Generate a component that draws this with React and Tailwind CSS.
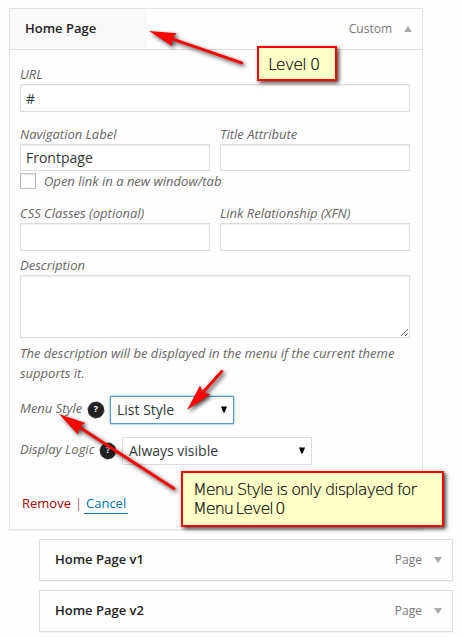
import React from "react";

const field = "block border border-[#ddd] bg-white shadow-[inset_0_1px_2px_rgba(0,0,0,0.07)] px-[5px] text-sm text-[#32373c] outline-none rounded-none";

function Label({ children }) {
  return <label className="block h-5 whitespace-nowrap text-[13px] leading-5 italic text-[#666]">{children}</label>;
}

function HelpIcon() {
  return (
    <svg width="18" height="18" viewBox="0 0 18 18" className="block shrink-0">
      <circle cx="9" cy="9" r="8.2" fill="#222" />
      <circle cx="9" cy="9" r="8.3" fill="none" stroke="#777" strokeWidth="0.8" strokeDasharray="3.5 3.02" />
      <text x="9" y="10.8" textAnchor="middle" fontSize="9" fontWeight="700" fill="#fff">?</text>
    </svg>
  );
}

function SelectBox({ children, className }) {
  return (
    <div className={"flex h-7 items-center justify-between border bg-white pl-1.5 pr-1.5 text-sm text-[#32373c] " + className}>
      <span>{children}</span>
      <svg className="mb-[2px]" width="6" height="7" viewBox="0 0 6 7"><path d="M0 0.5h6L3.7 6.5H2.3z" fill="#000" /></svg>
    </div>
  );
}

function Toggle({ up }) {
  return (
    <svg width="8" height="6" viewBox="0 0 8 6">
      <path d={up ? "M0 6L4 0l4 6z" : "M0 0h8L4 6z"} fill="#aaa" />
    </svg>
  );
}

function ChildItem({ title }) {
  return (
    <div className="flex h-[42px] w-[414px] items-center border border-[#ddd] bg-[#fefefe] pl-[15px] pr-[10px] shadow-[0_1px_1px_rgba(0,0,0,0.04)]">
      <span className="grow text-[13px] font-semibold text-[#222]">{title}</span>
      <span className="mr-3 text-[12px] text-[#777]">Page</span>
      <Toggle />
    </div>
  );
}

function Arrow({ x, y, length, angle }) {
  return (
    <g transform={`translate(${x} ${y}) rotate(${angle})`}>
      <path d={`M22 0H${length}`} stroke="#f00" strokeWidth="3" strokeLinecap="round" />
      <path d="M0 0L27 -6.8L24 0L27 6.8Z" fill="#f00" />
    </g>
  );
}

export default function App() {
  return (
    <div className="relative h-[637px] w-[462px] overflow-hidden bg-[#fefefe] pl-[9px] pt-2 font-['Open_Sans','Noto_Sans',sans-serif]">
      <section className="h-[522px] w-[414px] border border-[#e3e3e3] bg-[#fefefe] shadow-[0_1px_1px_rgba(0,0,0,0.04)]">
        <header className="flex h-[41px] items-center border-b border-[#ddd] pr-[10px]">
          <div className="flex h-10 w-[137px] items-center bg-[conic-gradient(#f6f6f6_25%,#fcfcfc_0_50%,#f6f6f6_0_75%,#fcfcfc_0)] bg-[length:2px_2px] pl-[15px] text-[13px] font-semibold text-[#222]">Home Page</div>
          <span className="ml-auto mr-3 text-[12px] text-[#777]">Custom</span>
          <Toggle up />
        </header>
        <div className="w-[401px] pl-[10px] pt-[14px]">
          <Label>URL</Label>
          <input className={field + " h-7 w-[390px]"} defaultValue="#" />
          <div className="mt-3 flex gap-[10px]">
            <div><Label>Navigation Label</Label><input className={field + " h-[27px] w-[190px]"} defaultValue="Frontpage" /></div>
            <div><Label>Title Attribute</Label><input className={field + " h-[27px] w-[190px]"} /></div>
          </div>
          <div className="mt-[2px] flex h-4 items-center gap-2">
            <span className="h-4 w-4 border border-[#bbb] bg-white shadow-[inset_0_1px_2px_rgba(0,0,0,0.1)]" />
            <Label>Open link in a new window/tab</Label>
          </div>
          <div className="mt-[14px] flex gap-[10px]">
            <div><Label>CSS Classes (optional)</Label><input className={field + " h-7 w-[190px]"} /></div>
            <div><Label>Link Relationship (XFN)</Label><input className={field + " h-7 w-[190px]"} /></div>
          </div>
          <div className="mt-1"><Label>Description</Label></div>
          <textarea className={field + " h-[63px] w-[390px] resize"} />
          <p className="mt-[5px] w-[390px] text-[13px] leading-5 italic text-[#666]">
            The description will be displayed in the menu if the current theme<br />supports it.
          </p>
          <div className="mt-[13px] flex h-7 items-center">
            <div className="w-[67px] pb-1"><Label>Menu Style</Label></div>
            <HelpIcon />
            <SelectBox className="ml-[5px] w-[124px] border-[#5b9dd9] shadow-[0_0_2px_rgba(30,140,190,0.8)]">List Style</SelectBox>
          </div>
          <div className="mt-[13px] flex h-7 items-center">
            <div className="w-[79px] pb-1"><Label>Display Logic</Label></div>
            <HelpIcon />
            <SelectBox className="ml-[5px] w-[190px] border-[#ddd]">Always visible</SelectBox>
          </div>
          <div className="mt-7 flex h-5 text-[13px] leading-5">
            <span className="ml-[2px] w-[49px] text-[#a00]">Remove</span>
            <span className="ml-[4px] w-[9px] text-[#b06080]">|</span>
            <a className="h-[21px] w-11 border-b border-[#0073aa] pl-[2px] text-[#0073aa]">Cancel</a>
          </div>
        </div>
      </section>
      <div className="ml-[30px] mt-[9px] flex flex-col gap-[9px]">
        <ChildItem title="Home Page v1" />
        <ChildItem title="Home Page v2" />
      </div>

      <svg className="pointer-events-none absolute left-0 top-0 drop-shadow-[2px_2px_2px_rgba(0,0,0,0.75)]" width="462" height="637" viewBox="0 0 462 637">
        <Arrow x={149} y={31} length={98} angle={19} />
        <Arrow x={187} y={410} length={52} angle={-48} />
        <Arrow x={59} y={414} length={137} angle={33} />
      </svg>
      <div className="absolute left-[257px] top-[46px] h-[35px] w-20 border-2 border-[#f00] bg-[#ffffc8] pl-[9px] pt-[7px] font-['DejaVu_Sans',sans-serif] text-base leading-5 font-extralight tracking-[-0.9px] text-black [-webkit-text-stroke:0.2px_black] shadow-[2px_2px_4px_rgba(0,0,0,0.75)]">
        Level 0
      </div>
      <div className="absolute left-[181px] top-[471px] h-14 w-[263px] whitespace-nowrap border-2 border-[#f00] bg-[#ffffc8] pl-[10px] pt-[7px] font-['DejaVu_Sans',sans-serif] text-base leading-[19px] font-extralight tracking-[-1px] text-black [-webkit-text-stroke:0.2px_black] shadow-[2px_2px_4px_rgba(0,0,0,0.75)]">
        Menu Style is only displayed for<br />
        <span className="[word-spacing:-1.5px]">Menu Level 0</span>
      </div>
    </div>
  );
}
